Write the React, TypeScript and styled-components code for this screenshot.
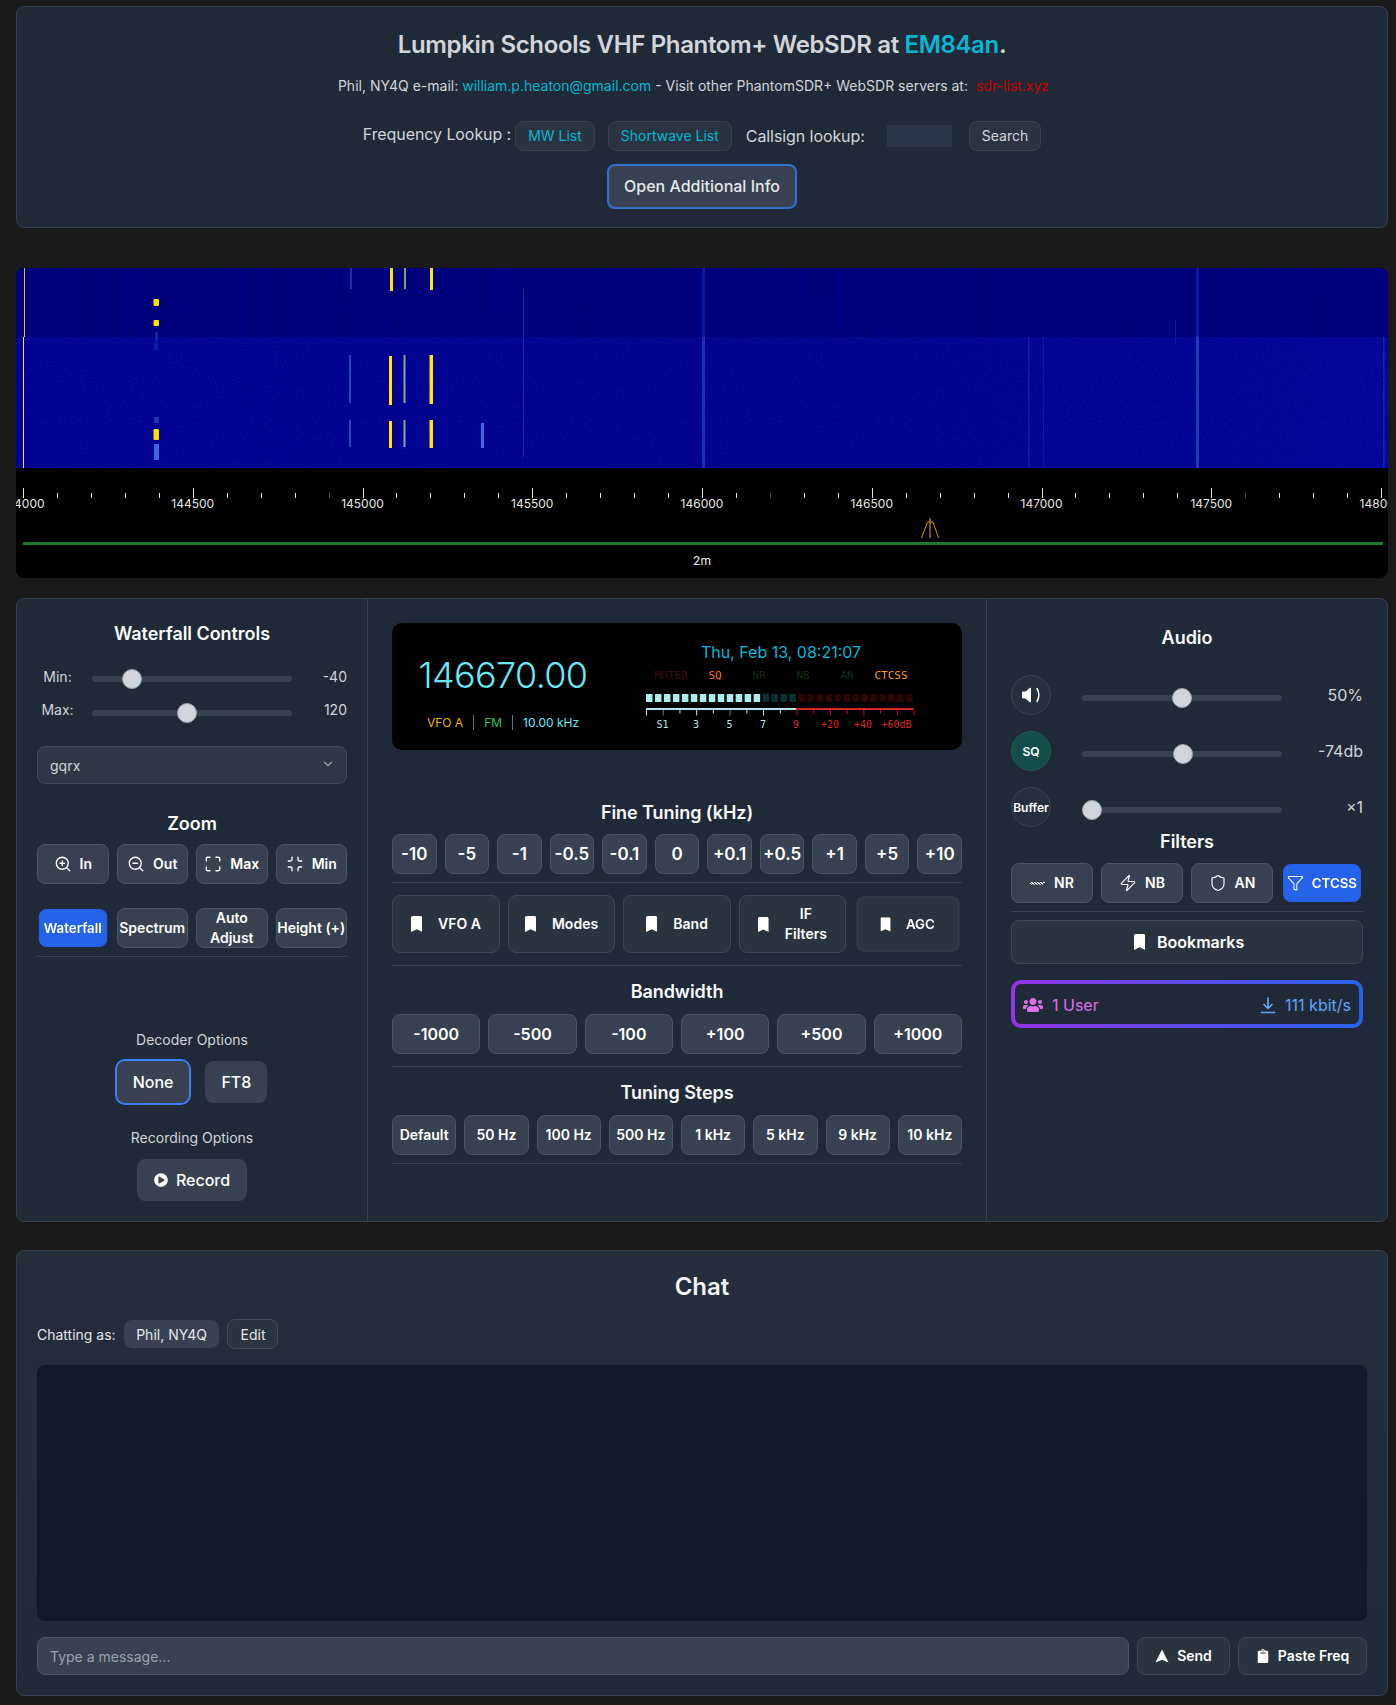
import React from "react";
import styled, { createGlobalStyle } from "styled-components";
import { ZoomIn, ZoomOut, Maximize, Minimize, Zap, Shield, Filter, ChevronDown } from "lucide-react";
import { FaUsers, FaPlayCircle, FaClipboard } from "react-icons/fa";

const Global = createGlobalStyle`
  * { box-sizing: border-box; }
  html, body { margin: 0; background: #1a1a1a; }
  body { font-family: Inter, "Noto Sans", sans-serif; color: #fff; }
  button, input, select { font-family: inherit; }
`;

const Page = styled.div`
  padding: 6px 8px 10px 16px;
  display: flex;
  flex-direction: column;
`;

const Card = styled.section`
  background: #1f2937;
  border: 1px solid #374151;
  border-radius: 8px;
`;

const Header = styled(Card)`
  height: 222px;
  padding-top: 22px;
  display: flex;
  flex-direction: column;
  align-items: center;
`;

const H1 = styled.h1`
  margin: 0;
  font-size: 24px;
  line-height: 32px;
  font-weight: 600;
  letter-spacing: -0.36px;
  color: #d1d5db;
`;

const Cyan = styled.span`
  color: #06b6d4;
`;

const Subtitle = styled.p`
  margin: 15px 0 0;
  padding-right: 17px;
  font-size: 14px;
  line-height: 20px;
  color: #d1d5db;
`;

const Red = styled.span`
  color: #cc0000;
  margin-left: 4px;
`;

const LookupRow = styled.div`
  margin-top: 25px;
  height: 30px;
  display: flex;
  align-items: center;
  font-size: 16px;
  letter-spacing: -0.08px;
  color: #d1d5db;
`;

const LookupLabel = styled.span<{ $lift: number }>`
  margin-top: ${(p) => -p.$lift}px;
`;

const SmallButton = styled.button<{ $cyan?: boolean; $ml: number; $mr: number }>`
  height: 30px;
  padding: 0 12px 1px;
  border-radius: 8px;
  border: 1px solid #374151;
  background: #2a3441;
  font-size: 14px;
  color: ${(p) => (p.$cyan ? "#06b6d4" : "#d1d5db")};
  margin: 0 ${(p) => p.$mr}px 0 ${(p) => p.$ml}px;
`;

const CallInput = styled.input`
  width: 65px;
  height: 22px;
  margin: 0 17px 0 22px;
  border: 0;
  padding: 0;
  background: #2a3748;
`;

const OpenButton = styled.button`
  margin-top: 13px;
  width: 190px;
  height: 45px;
  padding: 0 0 2px;
  border: 2px solid #3371d0;
  border-radius: 8px;
  background: #374151;
  color: #e5e7eb;
  font-size: 16px;
  font-weight: 500;
`;

const WaterfallBox = styled.div`
  margin-top: 40px;
  height: 310px;
  border-radius: 8px;
  overflow: hidden;
  background: #000;
`;

const Drawing = styled.svg`
  display: block;
`;

const Main = styled(Card)`
  margin-top: 20px;
  height: 624px;
  display: grid;
  grid-template-columns: 351px 619px 1fr;
`;

const Column = styled.div<{ $top: number; $x: number; $right: number; $border?: boolean }>`
  padding: ${(p) => `${p.$top}px ${p.$right}px 0 ${p.$x}px`};
  border-right: ${(p) => (p.$border ? "1px solid #374151" : "0")};
  display: flex;
  flex-direction: column;
`;

const Title = styled.h2<{ $mt?: number }>`
  margin: ${(p) => p.$mt ?? 0}px 0 0;
  font-size: 18px;
  line-height: 28px;
  font-weight: 600;
  letter-spacing: -0.05px;
  text-align: center;
  color: #f9fafb;
`;

const SliderRow = styled.div<{ $mt: number }>`
  margin-top: ${(p) => p.$mt}px;
  height: 24px;
  display: flex;
  align-items: center;
  font-size: 14px;
  color: #d1d5db;
`;

const SliderLabel = styled.span`
  width: 41px;
  margin-right: 14px;
  text-align: center;
`;

const Range = styled.input<{ $drop: number }>`
  appearance: none;
  -webkit-appearance: none;
  width: 200px;
  height: 20px;
  margin: ${(p) => p.$drop}px 0 0;
  background: transparent;
  &::-webkit-slider-runnable-track {
    height: 6px;
    border-radius: 3px;
    background: #374151;
  }
  &::-webkit-slider-thumb {
    -webkit-appearance: none;
    width: 20px;
    height: 20px;
    margin-top: -7px;
    border-radius: 50%;
    background: #d1d5db;
    border: 1px solid #9ca3af;
  }
`;

const Value = styled.span<{ $size: number }>`
  flex: 1;
  text-align: right;
  font-size: ${(p) => p.$size}px;
  color: #d1d5db;
`;

const SelectWrap = styled.div`
  position: relative;
  margin-top: 25px;
  height: 38px;
`;

const Select = styled.select`
  appearance: none;
  -webkit-appearance: none;
  width: 100%;
  height: 38px;
  padding: 0 12px;
  border-radius: 8px;
  border: 1px solid #404b5b;
  background: #2d3746;
  color: #d1d5db;
  font-size: 14px;
`;

const SelectChevron = styled(ChevronDown)`
  position: absolute;
  right: 12px;
  top: 11px;
  color: #9ca3af;
`;

const ButtonGrid = styled.div<{ $cols: number; $mt: number; $gap?: number }>`
  margin-top: ${(p) => p.$mt}px;
  display: grid;
  grid-template-columns: repeat(${(p) => p.$cols}, minmax(0, 1fr));
  gap: ${(p) => p.$gap ?? 8}px;
`;

const Btn = styled.button<{ $size?: number; $h?: number; $active?: boolean; $dark?: boolean; $pressed?: boolean; $pl?: number }>`
  height: ${(p) => p.$h ?? 40}px;
  padding: 0 0 0 ${(p) => p.$pl ?? 0}px;
  display: flex;
  align-items: center;
  justify-content: center;
  gap: 8px;
  border-radius: 8px;
  border: 1px solid ${(p) => (p.$active ? "#2563eb" : p.$dark ? "#3d4757" : "#4b5563")};
  background: ${(p) => (p.$active ? "#2563eb" : p.$dark ? "#2a3441" : "#374151")};
  color: #fff;
  font-size: ${(p) => p.$size ?? 14}px;
  line-height: 20px;
  font-weight: 600;
  transform: ${(p) => (p.$active || p.$pressed ? "scale(0.95)" : "none")};
`;

const BtnText = styled.span<{ $ml?: number }>`
  display: block;
  margin-left: ${(p) => p.$ml ?? 0}px;
  text-align: center;
`;

const Divider = styled.hr<{ $mt: number }>`
  width: 100%;
  margin: ${(p) => p.$mt}px 0 0;
  border: 0;
  border-top: 1px solid #374151;
`;

const Label = styled.div<{ $mt: number }>`
  margin-top: ${(p) => p.$mt}px;
  font-size: 14px;
  line-height: 20px;
  text-align: center;
  color: #d1d5db;
`;

const OptionRow = styled.div<{ $mt: number }>`
  margin-top: ${(p) => p.$mt}px;
  display: flex;
  align-items: center;
  justify-content: center;
  gap: 16px;
`;

const OptionButton = styled.button<{ $focus?: boolean; $px?: number }>`
  height: 42px;
  padding: 0 ${(p) => p.$px ?? 16}px;
  display: flex;
  align-items: center;
  gap: 8px;
  border: 0;
  border-radius: 8px;
  background: #374151;
  color: #fff;
  font-size: 16px;
  font-weight: 500;
  outline: ${(p) => (p.$focus ? "2px solid #3b82f6" : "none")};
`;

const Display = styled.div`
  height: 127px;
  border-radius: 10px;
  background: #000;
  display: grid;
  grid-template-columns: 222px 1fr;
`;

const DisplayLeft = styled.div`
  padding-top: 30px;
  display: flex;
  flex-direction: column;
  align-items: center;
`;

const Freq = styled.div`
  font-size: 36px;
  line-height: 44px;
  font-weight: 300;
  letter-spacing: -0.65px;
  color: #67e8f9;
`;

const FreqInfo = styled.div`
  margin-top: 15px;
  height: 20px;
  display: flex;
  align-items: center;
  gap: 10px;
  font-size: 12px;
`;

const InfoItem = styled.span<{ $c: string }>`
  color: ${(p) => p.$c};
`;

const InfoSep = styled.i`
  width: 1px;
  height: 15px;
  background: #6b7280;
`;

const DisplayRight = styled.div`
  padding: 17px 14px 0 0;
  display: flex;
  flex-direction: column;
  align-items: center;
`;

const DateText = styled.div`
  font-size: 16px;
  line-height: 24px;
  color: #06b6d4;
`;

const Flags = styled.div`
  margin-top: 5px;
  display: grid;
  grid-template-columns: repeat(6, 44px);
  font-family: "DejaVu Sans Mono", monospace;
  font-size: 11px;
  line-height: 14px;
  text-align: center;
`;

const Flag = styled.span<{ $c: string }>`
  color: ${(p) => p.$c};
`;

const Meter = styled.svg`
  display: block;
  margin-top: 9px;
`;

const AudioRow = styled.div<{ $mt: number }>`
  margin-top: ${(p) => p.$mt}px;
  display: flex;
  align-items: center;
`;

const Circle = styled.button<{ $on?: boolean }>`
  width: 40px;
  height: 40px;
  margin-right: 31px;
  flex: none;
  padding: 0;
  display: flex;
  align-items: center;
  justify-content: center;
  border-radius: 50%;
  border: 1px solid ${(p) => (p.$on ? "#1d5c52" : "#3b4655")};
  background: ${(p) => (p.$on ? "#134e4a" : "#262f3e")};
  color: #fff;
  font-size: 12px;
  font-weight: 600;
  white-space: nowrap;
`;

const Stats = styled.div`
  margin-top: 16px;
  height: 48px;
  padding: 4px;
  border-radius: 10px;
  background: linear-gradient(90deg, #9333ea, #2563eb);
`;

const StatsInner = styled.div`
  height: 40px;
  padding: 2px 8px 0 8px;
  border-radius: 6px;
  background: #1f2937;
  display: flex;
  align-items: center;
  justify-content: space-between;
  font-size: 16px;
`;

const Stat = styled.span<{ $c: string }>`
  display: flex;
  align-items: center;
  gap: 9px;
  color: ${(p) => p.$c};
`;

const Chat = styled(Card)`
  margin-top: 28px;
  height: 446px;
  padding: 20px 20px 0;
  background: linear-gradient(180deg, #232d3c, #1f2937);
`;

const ChatTitle = styled.h2`
  margin: 0;
  font-size: 24px;
  line-height: 32px;
  font-weight: 600;
  text-align: center;
  color: #f3f4f6;
`;

const ChatUser = styled.div`
  margin-top: 16px;
  height: 30px;
  display: flex;
  align-items: center;
  font-size: 14px;
  color: #e5e7eb;
`;

const Pill = styled.span`
  height: 28px;
  margin: 0 8px;
  padding: 0 12.5px;
  display: flex;
  align-items: center;
  border-radius: 8px;
  background: #374151;
`;

const EditButton = styled.button`
  height: 30px;
  width: 51px;
  padding: 0;
  border-radius: 8px;
  border: 1px solid #404b5b;
  background: #2a3441;
  color: #e5e7eb;
  font-size: 14px;
`;

const ChatLog = styled.div`
  margin-top: 16px;
  height: 256px;
  border-radius: 8px;
  background: #111827;
`;

const ChatInputRow = styled.div`
  margin-top: 16px;
  display: grid;
  grid-template-columns: 1fr 93px 129px;
  gap: 8px;
`;

const ChatInput = styled.input`
  height: 38px;
  padding: 0 12px;
  border-radius: 8px;
  border: 1px solid #4b5563;
  background: #374151;
  color: #fff;
  font-size: 14px;
  &::placeholder {
    color: #9ca3af;
  }
`;

const BookmarkIcon = ({ s = 17 }: { s?: number }) => (
  <svg width={(s * 12) / 17} height={s} viewBox="0 0 12 17" fill="#fff">
    <path d="M1.8 0h8.4C11.2 0 12 .8 12 1.8V17l-6-2.8L0 17V1.8C0 .8.8 0 1.8 0z" />
  </svg>
);

const NrIcon = () => (
  <svg width="16" height="6" viewBox="0 0 16 6" fill="none" stroke="#fff" strokeWidth="1">
    <path d="M0 4l2-2 1 2 2-2 1 2 2-2 1 2 2-2 1 2 2-2 1 1" />
    <path d="M1 5l2-2 1 2 2-2 1 2 2-2 1 2 2-2 1 2" strokeOpacity=".6" />
  </svg>
);

const VolumeIcon = () => (
  <svg width="19" height="16" viewBox="0 0 19 16" fill="#fff">
    <path d="M9 1.6v12.8c0 .8-.9 1.2-1.5.7L3.6 11.5H1.2C.5 11.5 0 11 0 10.3V5.7C0 5 .5 4.5 1.2 4.5h2.4L7.5.9C8.1.4 9 .8 9 1.6z" />
    <path d="M15 1.5c2.4 3.6 2.4 9.4 0 13" fill="none" stroke="#fff" strokeWidth="1.5" strokeLinecap="round" />
  </svg>
);

const SendIcon = () => (
  <svg width="14" height="14" viewBox="0 0 14 14" fill="#fff">
    <path d="M7 .5l6.5 13L7 10.8.5 13.5z" />
  </svg>
);

const DownloadIcon = () => (
  <svg width="16" height="17" viewBox="0 0 16 17" fill="none" stroke="#60a5fa" strokeWidth="1.7" strokeLinecap="round" strokeLinejoin="round">
    <path d="M8 1v10M4 7.5l4 4 4-4M1.5 15.5h13" />
  </svg>
);

const majorLabels = [144000, 144500, 145000, 145500, 146000, 146500, 147000, 147500, 148000];
const dimMinor = new Set([9, 22, 36]);

type Sig = [number, number, number, number, string];
const signals: Sig[] = [
  [350, 268, 2, 21, "#1a2fa8"], [390, 268, 3, 23, "#ffe60a"], [404, 268, 2, 21, "#8d9a6a"], [430, 268, 3, 22, "#ffe60a"],
  [349, 355, 2, 48, "#2a46b8"], [389, 356, 3, 49, "#ffe60a"], [403.5, 355, 2, 48, "#8ea0a0"], [429.5, 355, 3.5, 49, "#ffe60a"],
  [349, 420, 2, 27, "#2a46b8"], [389, 421, 3, 27, "#ffe60a"], [403.5, 420, 2, 27, "#8ea0a0"], [429.5, 420, 3.5, 28, "#ffe60a"],
  [481, 423, 3, 25, "#3a6ae0"],
  [523, 289, 1, 168, "#1b2aa8"],
  [702, 268, 3, 69, "#0a1aa0"], [702, 337, 3, 131, "#1c30b0"],
  [1196, 268, 3, 69, "#0a1aa0"], [1196, 337, 3, 131, "#2238b4"],
  [1028, 337, 1.5, 131, "#0f20a8"], [1043, 337, 1, 131, "#0a18a4"], [1175, 320, 1, 24, "#0c1ca0"], [1383, 337, 1.5, 131, "#1426a8"],
];

const WaterfallArt = () => (
  <Drawing width="1372" height="310" viewBox="16 268 1372 310">
    <defs>
      <filter id="speckle" x="0" y="0" width="100%" height="100%">
        <feTurbulence type="fractalNoise" baseFrequency="0.8" numOctaves="2" seed="4" />
        <feColorMatrix values="0 0 0 0 0.05  0 0 0 0 0.08  0 0 0 0 0.75  0 0 0 1.2 -0.45" />
      </filter>
      <filter id="streaks" x="0" y="0" width="100%" height="100%">
        <feTurbulence type="fractalNoise" baseFrequency="0.35 0.002" numOctaves="2" seed="9" />
        <feColorMatrix values="0 0 0 0 0  0 0 0 0 0  0 0 0 0 0.1  0 0 0 0.7 -0.3" />
      </filter>
      <linearGradient id="lower" x1="0" x2="1" y1="0" y2="0">
        <stop offset="0" stopColor="#00008f" />
        <stop offset="0.6" stopColor="#00008a" />
        <stop offset="1" stopColor="#030396" />
      </linearGradient>
    </defs>
    <rect x="16" y="268" width="1372" height="69" fill="#00007e" />
    <rect x="16" y="268" width="1372" height="69" filter="url(#streaks)" />
    <rect x="16" y="337" width="1372" height="131" fill="url(#lower)" />
    <rect x="16" y="337" width="1372" height="131" filter="url(#speckle)" opacity="0.3" />
    <rect x="24" y="268" width="1" height="69" fill="#e0c030" />
    <rect x="23" y="337" width="1" height="131" fill="#f5e26a" />
    <rect x="153.5" y="299" width="5.5" height="7" rx="1" fill="#ffe000" />
    <rect x="153.5" y="320" width="5.5" height="6" rx="1" fill="#ffe000" />
    <rect x="155.5" y="332" width="2" height="9" fill="#1a33b0" />
    <rect x="154" y="342" width="4" height="8" fill="#0a1ea4" />
    <rect x="154" y="417" width="5" height="6" fill="#1f3bb0" />
    <rect x="153.5" y="429" width="5.5" height="11" rx="1" fill="#ffe000" />
    <rect x="154" y="444" width="5" height="16" fill="#3a68dc" />
    {signals.map(([x, y, w, h, c], i) => (
      <rect key={i} x={x} y={y} width={w} height={h} fill={c} />
    ))}
    {Array.from({ length: 41 }, (_, i) => {
      const x = 23 + i * 33.95;
      const major = i % 5 === 0;
      return (
        <rect
          key={i}
          x={Math.round(x)}
          y={major ? 488 : 493}
          width="1"
          height={major ? 10 : 5}
          fill={dimMinor.has(i) ? "#555" : "#e5e5e5"}
        />
      );
    })}
    {majorLabels.map((f, i) => (
      <text key={f} x={23 + i * 169.75} y="507.5" textAnchor="middle" fill="#e5e5e5" fontFamily="Inter, sans-serif" fontSize="12">
        {f}
      </text>
    ))}
    <path d="M921.5 538L927.5 522H933L938.5 538" fill="none" stroke="#d99a00" strokeWidth="1" />
    <path d="M930 518V538" stroke="#e8b400" strokeWidth="1" />
    <rect x="23" y="542" width="1360" height="3" fill="#1b7a32" />
    <text x="702" y="564.5" textAnchor="middle" fill="#f0f0f0" fontFamily="Inter, sans-serif" fontSize="12">
      2m
    </text>
  </Drawing>
);

const meterLabels: [number, string, string][] = [
  [662.4, "S1", "#b8e8ee"], [696, "3", "#b8e8ee"], [729.5, "5", "#b8e8ee"], [763, "7", "#b8e8ee"],
  [796, "9", "#dc2626"], [830, "+20", "#dc2626"], [863, "+40", "#dc2626"], [896.5, "+60dB", "#dc2626"],
];

const segColor = (i: number) => (i < 13 ? "#a8eeee" : i < 17 ? "#063232" : "#2b0505");

const SMeter = () => (
  <Meter width="270" height="40" viewBox="646 692 270 40">
    {Array.from({ length: 30 }, (_, i) => (
      <rect key={i} x={646 + i * 8.97} y="694" width="6.5" height="8" fill={segColor(i)} />
    ))}
    <rect x="646" y="708" width="150" height="2" fill="#b0e4ee" />
    <rect x="796" y="708" width="117.5" height="2" fill="#dc2626" />
    {Array.from({ length: 17 }, (_, i) => {
      const x = 646 + i * 16.72;
      const tall = i % 2 === 1 || i === 0 || i === 16;
      return (
        <rect
          key={i}
          x={x}
          y="710"
          width="1"
          height={tall ? 5.5 : 3.5}
          fill={x >= 795 ? "#b91c1c" : i % 4 === 1 ? "#5d7c80" : "#c4eef2"}
        />
      );
    })}
    {meterLabels.map(([x, t, c]) => (
      <text key={t} x={x} y="727.5" textAnchor="middle" fill={c} fontFamily="DejaVu Sans Mono, monospace" fontSize="10">
        {t}
      </text>
    ))}
  </Meter>
);

const fine = ["-10", "-5", "-1", "-0.5", "-0.1", "0", "+0.1", "+0.5", "+1", "+5", "+10"];
const bandwidth = ["-1000", "-500", "-100", "+100", "+500", "+1000"];
const steps = ["Default", "50 Hz", "100 Hz", "500 Hz", "1 kHz", "5 kHz", "9 kHz", "10 kHz"];
const menus: React.ReactNode[] = ["VFO A", "Modes", "Band", <>IF<br />Filters</>, "AGC"];

export default function App() {
  return (
    <Page>
      <Global />
      <Header>
        <H1>
          Lumpkin Schools VHF Phantom+ WebSDR at <Cyan>EM84an</Cyan>.
        </H1>
        <Subtitle>
          Phil, NY4Q e-mail: <Cyan>william.p.heaton@gmail.com</Cyan> - Visit other PhantomSDR+ WebSDR servers at: <Red>sdr-list.xyz</Red>
        </Subtitle>
        <LookupRow>
          <LookupLabel $lift={5}>Frequency Lookup :</LookupLabel>
          <SmallButton $cyan $ml={4} $mr={9}>MW List</SmallButton>
          <SmallButton $cyan $ml={4} $mr={14}>Shortwave List</SmallButton>
          <LookupLabel $lift={1}>Callsign lookup:</LookupLabel>
          <CallInput />
          <SmallButton $ml={0} $mr={0}>Search</SmallButton>
        </LookupRow>
        <OpenButton>Open Additional Info</OpenButton>
      </Header>

      <WaterfallBox>
        <WaterfallArt />
      </WaterfallBox>

      <Main>
        <Column $top={21} $x={20} $right={20} $border>
          <Title>Waterfall Controls</Title>
          <SliderRow $mt={16}>
            <SliderLabel>Min:</SliderLabel>
            <Range type="range" $drop={6} min={-100} max={260} defaultValue={-40} />
            <Value $size={14}>-40</Value>
          </SliderRow>
          <SliderRow $mt={9}>
            <SliderLabel>Max:</SliderLabel>
            <Range type="range" $drop={8} min={-50} max={310} defaultValue={120} />
            <Value $size={14}>120</Value>
          </SliderRow>
          <SelectWrap>
            <Select defaultValue="gqrx">
              <option value="gqrx">gqrx</option>
            </Select>
            <SelectChevron size={14} />
          </SelectWrap>
          <Title $mt={26}>Zoom</Title>
          <ButtonGrid $cols={4} $mt={6}>
            <Btn><ZoomIn size={18} strokeWidth={1.75} /><BtnText>In</BtnText></Btn>
            <Btn><ZoomOut size={18} strokeWidth={1.75} /><BtnText>Out</BtnText></Btn>
            <Btn><Maximize size={18} strokeWidth={1.75} /><BtnText>Max</BtnText></Btn>
            <Btn><Minimize size={18} strokeWidth={1.75} /><BtnText>Min</BtnText></Btn>
          </ButtonGrid>
          <ButtonGrid $cols={4} $mt={24}>
            <Btn $active>Waterfall</Btn>
            <Btn>Spectrum</Btn>
            <Btn>Auto<br />Adjust</Btn>
            <Btn>Height (+)</Btn>
          </ButtonGrid>
          <Divider $mt={8} />
          <Label $mt={73}>Decoder Options</Label>
          <OptionRow $mt={11}>
            <OptionButton $focus>None</OptionButton>
            <OptionButton>FT8</OptionButton>
          </OptionRow>
          <Label $mt={25}>Recording Options</Label>
          <OptionRow $mt={11}>
            <OptionButton $px={17}><FaPlayCircle size={14} />Record</OptionButton>
          </OptionRow>
        </Column>

        <Column $top={24} $x={24} $right={24} $border>
          <Display>
            <DisplayLeft>
              <Freq>146670.00</Freq>
              <FreqInfo>
                <InfoItem $c="#eab308">VFO A</InfoItem>
                <InfoSep />
                <InfoItem $c="#22c55e">FM</InfoItem>
                <InfoSep />
                <InfoItem $c="#67e8f9">10.00 kHz</InfoItem>
              </FreqInfo>
            </DisplayLeft>
            <DisplayRight>
              <DateText>Thu, Feb 13, 08:21:07</DateText>
              <Flags>
                <Flag $c="#3a0e0e">MUTED</Flag>
                <Flag $c="#f97316">SQ</Flag>
                <Flag $c="#0f2e1c">NR</Flag>
                <Flag $c="#0f2e1c">NB</Flag>
                <Flag $c="#0f2e1c">AN</Flag>
                <Flag $c="#f59e0b">CTCSS</Flag>
              </Flags>
              <SMeter />
            </DisplayRight>
          </Display>
          <Title $mt={49}>Fine Tuning (kHz)</Title>
          <ButtonGrid $cols={11} $mt={7}>
            {fine.map((t) => <Btn key={t} $size={17}>{t}</Btn>)}
          </ButtonGrid>
          <Divider $mt={8} />
          <ButtonGrid $cols={5} $mt={12}>
            {menus.map((t, i) => (
              <Btn key={i} $h={58} $dark $pressed={i === 4}>
                <BookmarkIcon s={i === 3 || i === 4 ? 15 : 16} />
                <BtnText $ml={8}>{t}</BtnText>
              </Btn>
            ))}
          </ButtonGrid>
          <Divider $mt={12} />
          <Title $mt={12}>Bandwidth</Title>
          <ButtonGrid $cols={6} $mt={8}>
            {bandwidth.map((t) => <Btn key={t} $size={16}>{t}</Btn>)}
          </ButtonGrid>
          <Divider $mt={12} />
          <Title $mt={12}>Tuning Steps</Title>
          <ButtonGrid $cols={8} $mt={8}>
            {steps.map((t) => <Btn key={t}>{t}</Btn>)}
          </ButtonGrid>
          <Divider $mt={8} />
        </Column>

        <Column $top={25} $x={24} $right={24}>
          <Title>Audio</Title>
          <AudioRow $mt={23}>
            <Circle><VolumeIcon /></Circle>
            <Range type="range" $drop={6} min={0} max={100} defaultValue={50} />
            <Value $size={16}>50%</Value>
          </AudioRow>
          <AudioRow $mt={16}>
            <Circle $on>SQ</Circle>
            <Range type="range" $drop={6} min={-150} max={0} defaultValue={-74} />
            <Value $size={16}>-74db</Value>
          </AudioRow>
          <AudioRow $mt={16}>
            <Circle>Buffer</Circle>
            <Range type="range" $drop={6} min={1} max={4} defaultValue={1} />
            <Value $size={16}>×1</Value>
          </AudioRow>
          <Title $mt={1}>Filters</Title>
          <ButtonGrid $cols={4} $mt={7}>
            <Btn><NrIcon /><BtnText>NR</BtnText></Btn>
            <Btn><Zap size={18} strokeWidth={1.5} /><BtnText>NB</BtnText></Btn>
            <Btn><Shield size={18} strokeWidth={1.5} /><BtnText>AN</BtnText></Btn>
            <Btn $active><Filter size={18} strokeWidth={1.5} /><BtnText>CTCSS</BtnText></Btn>
          </ButtonGrid>
          <Divider $mt={8} />
          <ButtonGrid $cols={1} $mt={8}>
            <Btn $h={44} $size={16} $dark $pl={4}><BookmarkIcon s={16} /><BtnText $ml={4}>Bookmarks</BtnText></Btn>
          </ButtonGrid>
          <Stats>
            <StatsInner>
              <Stat $c="#e070e8"><FaUsers size={20} />1 User</Stat>
              <Stat $c="#60a5fa"><DownloadIcon />111 kbit/s</Stat>
            </StatsInner>
          </Stats>
        </Column>
      </Main>

      <Chat>
        <ChatTitle>Chat</ChatTitle>
        <ChatUser>
          Chatting as:
          <Pill>Phil, NY4Q</Pill>
          <EditButton>Edit</EditButton>
        </ChatUser>
        <ChatLog />
        <ChatInputRow>
          <ChatInput placeholder="Type a message..." />
          <Btn $h={38} $dark><SendIcon /><BtnText>Send</BtnText></Btn>
          <Btn $h={38} $dark><FaClipboard size={14} /><BtnText>Paste Freq</BtnText></Btn>
        </ChatInputRow>
      </Chat>
    </Page>
  );
}
